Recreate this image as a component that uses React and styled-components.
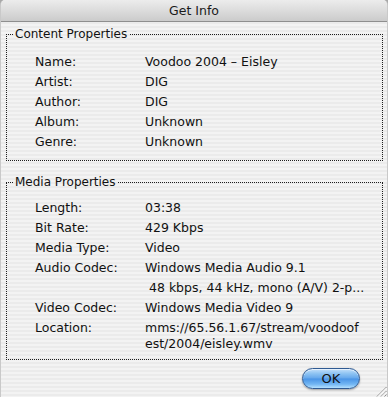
import React from "react";
import styled, { createGlobalStyle } from "styled-components";

const Global = createGlobalStyle`
  html, body { margin: 0; padding: 0; background: #a8a8a8; }
  body { font-family: "DejaVu Sans", "Liberation Sans", sans-serif; }
  * { box-sizing: border-box; }
`;

const Window = styled.div`
  width: 388px;
  height: 397px;
  display: flex;
  flex-direction: column;
  border-radius: 5px 5px 0 0;
  overflow: hidden;
  background: repeating-linear-gradient(
    to bottom,
    #f3f3f3 0px,
    #f3f3f3 2px,
    #ebebeb 2px,
    #ebebeb 4px
  );
  border-left: 1px solid #c9c9c9;
  border-right: 1px solid #c9c9c9;
  position: relative;
`;

const TitleBar = styled.div`
  height: 22px;
  flex: none;
  display: flex;
  align-items: center;
  justify-content: center;
  background: linear-gradient(to bottom, #ececec 0%, #dcdcdc 50%, #cbcbcb 100%);
  border-bottom: 1px solid #8e8e8e;
  font-size: 12.5px;
  color: #1a1a1a;
  padding-bottom: 1px;
`;

const Body = styled.div`
  flex: 1;
  display: flex;
  flex-direction: column;
  padding: 5px 4px 0 5px;
`;

const Group = styled.fieldset`
  margin: ${(p) => p.$mt}px 0 0 0;
  border: 1px dotted #1e1e1e;
  padding: ${(p) => p.$pt}px 6px ${(p) => p.$pb}px 6px;
  min-width: 0;
`;

const Legend = styled.legend`
  font-size: 12px;
  line-height: 14px;
  padding: 0 2px;
  color: #111;
`;

const Rows = styled.div`
  display: grid;
  grid-template-columns: 110px 1fr;
  row-gap: 4px;
  padding-left: 22px;
  font-size: 12.5px;
  line-height: 16px;
  color: #111;
`;

const Label = styled.div``;

const Value = styled.div`
  padding-left: ${(p) => (p.$indent ? 4 : 0)}px;
  white-space: nowrap;
`;

const Footer = styled.div`
  display: flex;
  justify-content: flex-end;
  padding: 8px 23px 0 0;
`;

const OkButton = styled.button`
  width: 58px;
  height: 21px;
  border-radius: 11px;
  border: 1px solid #2f5a92;
  background: linear-gradient(
    to bottom,
    #c4e0fa 0%,
    #8cc2f2 25%,
    #66a8ec 48%,
    #4a94e6 52%,
    #72b6f3 80%,
    #b4e0fe 100%
  );
  box-shadow: 0 1px 2px rgba(0, 0, 0, 0.35), inset 0 1px 0 rgba(255, 255, 255, 0.6);
  font-family: "DejaVu Sans", "Liberation Sans", sans-serif;
  font-size: 13px;
  color: #111;
  padding: 0;
  line-height: 19px;
`;

const Grip = styled.svg`
  position: absolute;
  right: 0;
  bottom: 0;
`;

const content = [
  ["Name:", "Voodoo 2004 \u2013 Eisley"],
  ["Artist:", "DIG"],
  ["Author:", "DIG"],
  ["Album:", "Unknown"],
  ["Genre:", "Unknown"],
];

const media = [
  ["Length:", "03:38"],
  ["Bit Rate:", "429 Kbps"],
  ["Media Type:", "Video"],
  ["Audio Codec:", "Windows Media Audio 9.1"],
  ["", "48 kbps, 44 kHz, mono (A/V) 2-p...", true],
  ["Video Codec:", "Windows Media Video 9"],
];

export default function App() {
  return (
    <>
      <Global />
      <Window>
        <TitleBar>Get Info</TitleBar>
        <Body>
          <Group $mt={0} $pt={13} $pb={10}>
            <Legend>Content Properties</Legend>
            <Rows>
              {content.map(([l, v]) => (
                <React.Fragment key={l}>
                  <Label>{l}</Label>
                  <Value>{v}</Value>
                </React.Fragment>
              ))}
            </Rows>
          </Group>
          <Group $mt={14} $pt={11} $pb={7}>
            <Legend>Media Properties</Legend>
            <Rows>
              {media.map(([l, v, indent], i) => (
                <React.Fragment key={i}>
                  <Label>{l}</Label>
                  <Value $indent={indent}>{v}</Value>
                </React.Fragment>
              ))}
              <Label>Location:</Label>
              <Value>
                mms://65.56.1.67/stream/voodoof
                <br />
                est/2004/eisley.wmv
              </Value>
            </Rows>
          </Group>
          <Footer>
            <OkButton>OK</OkButton>
          </Footer>
        </Body>
        <Grip width="13" height="13" viewBox="0 0 13 13">
          <line x1="3" y1="12.5" x2="12.5" y2="3" stroke="#8a8a8a" strokeWidth="1" />
          <line x1="4" y1="12.5" x2="12.5" y2="4" stroke="#ffffff" strokeWidth="1" />
          <line x1="7" y1="12.5" x2="12.5" y2="7" stroke="#8a8a8a" strokeWidth="1" />
          <line x1="8" y1="12.5" x2="12.5" y2="8" stroke="#ffffff" strokeWidth="1" />
          <line x1="10.5" y1="12.5" x2="12.5" y2="10.5" stroke="#8a8a8a" strokeWidth="1" />
        </Grip>
      </Window>
    </>
  );
}
